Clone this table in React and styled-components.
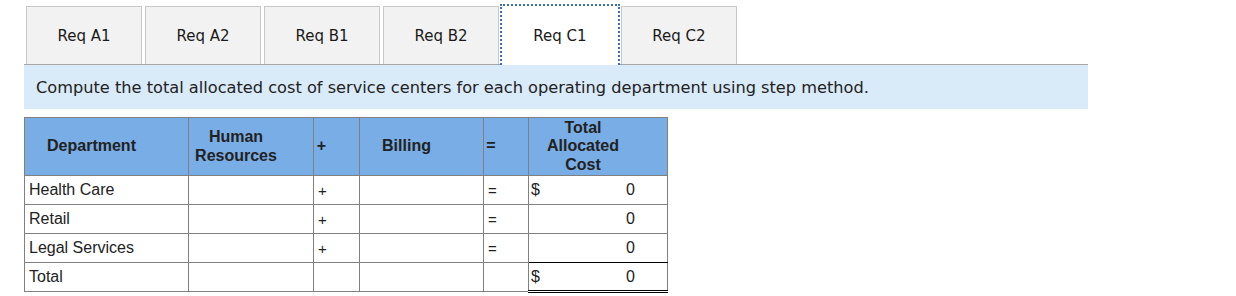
import styled, { createGlobalStyle } from 'styled-components'

const GlobalStyle = createGlobalStyle`
  body {
    margin: 0;
    background: #fff;
    font-family: "DejaVu Sans", Verdana, sans-serif;
  }
  * {
    box-sizing: border-box;
  }
`

const Page = styled.div`
  padding: 0 0 0 24px;
  width: 1088px;
`

const TabBar = styled.div`
  display: flex;
  gap: 3px;
  padding: 6px 0 0 2px;
  border-bottom: 1px solid #a6a6a6;
`

const Tab = styled.div`
  width: ${p => (p.$active ? '120px' : '116px')};
  height: ${p => (p.$active ? '61px' : '58px')};
  margin: ${p => (p.$active ? '-2px -2px -1px' : '0')};
  display: flex;
  align-items: center;
  justify-content: center;
  padding-top: ${p => (p.$active ? '1px' : '0')};
  font-size: 15px;
  color: #1a1a1a;
  background: ${p => (p.$active ? '#fff' : '#f2f2f2')};
  border: ${p => (p.$active ? '2px dotted #3b6db3' : '1px solid #c8c8c8')};
  border-bottom: none;
`

const Instruction = styled.div`
  background: #d9eaf8;
  padding: 0 12px;
  height: 44px;
  display: flex;
  align-items: center;
  font-size: 16.2px;
  color: #222;
`

const Table = styled.table`
  margin-top: 8px;
  width: 643px;
  table-layout: fixed;
  border-collapse: collapse;
  font-family: "Liberation Sans", Arial, sans-serif;
  color: #222;
`

const HeadCell = styled.th`
  background: #78ade5;
  border: 1px solid #808080;
  height: 58px;
  padding: 0 30px 0 0;
  font-size: 16px;
  font-weight: 700;
  line-height: 18.5px;
  text-align: center;
`

const Cell = styled.td`
  border: 1px solid #808080;
  border-bottom: ${p => (p.$rule ? '1px solid #000' : '1px solid #808080')};
  height: 29px;
  padding: 0 4px;
  font-size: ${p => (p.$sign ? '15px' : '16px')};
  vertical-align: middle;
`

const TotalCell = styled.td`
  border: 1px solid #808080;
  border-bottom: ${p =>
    p.$double ? '3px double #000' : p.$rule ? '1px solid #000' : '1px solid #808080'};
  height: 29px;
  padding: 0 32px 0 2px;
  font-size: 16px;
`

const Amount = styled.div`
  display: flex;
  justify-content: space-between;
  align-items: center;
`

const tabs = ['Req A1', 'Req A2', 'Req B1', 'Req B2', 'Req C1', 'Req C2']
const widths = [164, 125, 46, 124, 45, 139]

const rows = [
  { name: 'Health Care', sign: true, dollar: true },
  { name: 'Retail', sign: true },
  { name: 'Legal Services', sign: true, rule: true },
  { name: 'Total', total: true, dollar: true },
]

const App = () => {
  return (
    <>
      <GlobalStyle />
      <Page>
        <TabBar>
          {tabs.map(t => (
            <Tab key={t} $active={t === 'Req C1'}>{t}</Tab>
          ))}
        </TabBar>
        <Instruction>
          Compute the total allocated cost of service centers for each operating department using step method.
        </Instruction>
        <Table>
          <colgroup>
            {widths.map((w, i) => (
              <col key={i} style={{ width: w }} />
            ))}
          </colgroup>
          <thead>
            <tr>
              <HeadCell>Department</HeadCell>
              <HeadCell>Human<br />Resources</HeadCell>
              <HeadCell>+</HeadCell>
              <HeadCell>Billing</HeadCell>
              <HeadCell>=</HeadCell>
              <HeadCell>Total<br />Allocated<br />Cost</HeadCell>
            </tr>
          </thead>
          <tbody>
            {rows.map(r => (
              <tr key={r.name}>
                <Cell>{r.name}</Cell>
                <Cell />
                <Cell $sign>{r.sign ? '+' : ''}</Cell>
                <Cell />
                <Cell $sign>{r.sign ? '=' : ''}</Cell>
                <TotalCell $rule={r.rule} $double={r.total}>
                  <Amount>
                    <span>{r.dollar ? '$' : ''}</span>
                    <span>0</span>
                  </Amount>
                </TotalCell>
              </tr>
            ))}
          </tbody>
        </Table>
      </Page>
    </>
  )
}

export default App
